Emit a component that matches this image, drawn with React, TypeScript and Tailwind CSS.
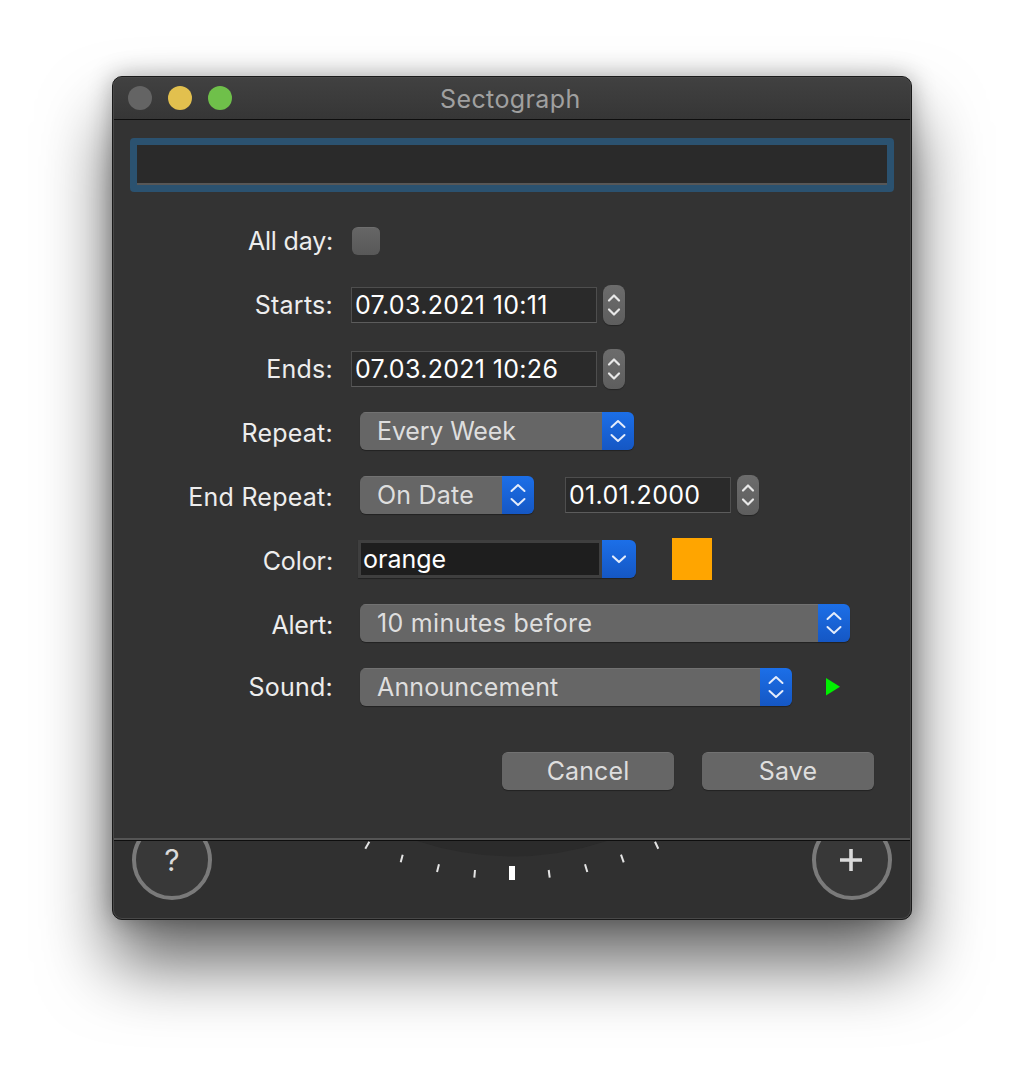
import type { ReactNode } from "react";

function Chevrons() {
  return (
    <svg width="16" height="26" viewBox="0 0 16 26" fill="none" stroke="currentColor" strokeWidth="2" strokeLinecap="round" strokeLinejoin="round">
      <path d="M1.5 9 L8 3 L14.5 9" />
      <path d="M1.5 17 L8 23 L14.5 17" />
    </svg>
  );
}

function Row({ label, h = "h-[64px]", tracking = "tracking-[0.25px]", children }: { label: string; h?: string; tracking?: string; children: ReactNode }) {
  return (
    <div className={`flex items-center ${h}`}>
      <div className={`w-[220px] shrink-0 text-right text-[25px] leading-none text-[#ededed] ${tracking}`}>{label}</div>
      {children}
    </div>
  );
}

function Stepper() {
  return (
    <div className="flex h-[40px] w-[22px] items-center justify-center rounded-[8px] bg-gradient-to-b from-[#6c6c6c] to-[#5e5e5e] text-[#e8e8e8] shadow-[0_1px_1px_rgba(0,0,0,0.3)]">
      <svg width="14" height="24" viewBox="0 0 14 24" fill="none" stroke="currentColor" strokeWidth="2.2" strokeLinecap="round" strokeLinejoin="round">
        <path d="M2 7.5 L7 2.5 L12 7.5" />
        <path d="M2 16.5 L7 21.5 L12 16.5" />
      </svg>
    </div>
  );
}

function DateField({ value, w }: { value: string; w: string }) {
  return (
    <div className={`flex h-[36px] items-center border border-[#4e4e4e] border-b-[#5c5c5c] bg-[#2a2a2a] pl-[3px] text-[25px] leading-none tracking-[0.32px] text-white ${w}`}>
      {value}
    </div>
  );
}

function Popup({ value, w, tracking = "tracking-[0.2px]" }: { value: string; w: string; tracking?: string }) {
  return (
    <div className={`flex h-[38px] overflow-hidden rounded-[6px] shadow-[0_1px_1px_rgba(0,0,0,0.35)] ${w}`}>
      <div className={`flex flex-1 items-center border-t border-[#727272] bg-[#666666] pl-[17px] text-[25px] leading-none text-[#dedede] ${tracking}`}>
        {value}
      </div>
      <div className="flex w-[32px] items-center justify-center bg-gradient-to-b from-[#1c6fe8] to-[#1557c4] text-[#e4ecfb]">
        <Chevrons />
      </div>
    </div>
  );
}

function Circle({ children }: { children: ReactNode }) {
  return (
    <div className="-mt-[21px] flex h-[80px] w-[80px] items-center justify-center rounded-full border-[4px] border-[#7a7a7a] bg-[#383838] text-[#dadada]">
      {children}
    </div>
  );
}

const ticks = [
  "M369.3 841.7 L365.3 848.7",
  "M402.7 854.7 L400.7 862.3",
  "M439 864.3 L437 872",
  "M475 870 L474.3 877.7",
  "M548.7 870 L549.7 877.7",
  "M585 864.3 L587.3 872",
  "M621 854.7 L623.7 862.3",
  "M655 841.7 L658.3 848.7",
];

export default function App() {
  return (
    <div className="h-[1068px] overflow-hidden bg-white pl-[112px] pt-[76px] font-['Inter',sans-serif]">
      <div className="relative h-[844px] w-[800px] overflow-hidden rounded-[10px] border border-[#1a1a1a] bg-[#333333] shadow-[0_44px_70px_rgba(0,0,0,0.6),0_0_24px_rgba(0,0,0,0.3)]">
        <div className="flex h-[43px] items-center border-b border-[#0e0e0e] bg-gradient-to-b from-[#414141] to-[#363636] pl-[15px]">
          <div className="flex gap-[16px]">
            <div className="h-[24px] w-[24px] rounded-full bg-[#646464]" />
            <div className="h-[24px] w-[24px] rounded-full bg-[#e2c04e]" />
            <div className="h-[24px] w-[24px] rounded-full bg-[#6fc04a]" />
          </div>
          <div className="ml-[208px] translate-y-[1px] text-[25px] leading-none tracking-[0.4px] text-[#a0a0a0]">Sectograph</div>
        </div>

        <div className="h-[720px] border-b-2 border-[#555555]">
          <div className="px-[17px] pt-[18px]">
            <div className="h-[54px] w-[764px] rounded-[4px] border-[7px] border-[#2b5270] bg-[#2a2a2a] shadow-[inset_0_-2px_0_#575757]" />
          </div>

          <div className="mt-[17px]">
            <Row label="All day:" tracking="tracking-[-0.2px]">
              <div className="ml-[19px] h-[28px] w-[28px] rounded-[6px] border-t border-[#6e6e6e] bg-gradient-to-b from-[#666666] to-[#585858]" />
            </Row>
            <Row label="Starts:">
              <div className="ml-[18px] flex items-center gap-[6px]">
                <DateField value="07.03.2021 10:11" w="w-[246px]" />
                <Stepper />
              </div>
            </Row>
            <Row label="Ends:">
              <div className="ml-[18px] flex items-center gap-[6px]">
                <DateField value="07.03.2021 10:26" w="w-[246px]" />
                <Stepper />
              </div>
            </Row>
            <Row label="Repeat:">
              <div className="mb-[4px] ml-[27px]">
                <Popup value="Every Week" w="w-[274px]" tracking="tracking-[-0.15px]" />
              </div>
            </Row>
            <Row label="End Repeat:">
              <div className="mb-[4px] ml-[27px] flex items-center">
                <Popup value="On Date" w="w-[174px]" />
                <div className="ml-[31px] mr-[6px]">
                  <DateField value="01.01.2000" w="w-[166px]" />
                </div>
                <Stepper />
              </div>
            </Row>
            <Row label="Color:" tracking="tracking-[-0.1px]">
              <div className="mb-[4px] ml-[25px] flex items-center">
                <div className="flex h-[38px] w-[278px] overflow-hidden rounded-r-[6px] shadow-[0_1px_1px_rgba(0,0,0,0.35)]">
                  <div className="flex flex-1 items-center border-[3px] border-[#3f3f3f] bg-[#1e1e1e] pl-[2px] text-[25px] leading-none text-white">
                    orange
                  </div>
                  <div className="flex w-[34px] items-center justify-center bg-gradient-to-b from-[#1c6fe8] to-[#1557c4] text-[#e4ecfb]">
                    <svg width="16" height="10" viewBox="0 0 16 10" fill="none" stroke="currentColor" strokeWidth="2.2" strokeLinecap="round" strokeLinejoin="round">
                      <path d="M2 2.5 L8 8 L14 2.5" />
                    </svg>
                  </div>
                </div>
                <div className="ml-[36px] h-[42px] w-[40px] bg-[#ffa500]" />
              </div>
            </Row>
            <Row label="Alert:" tracking="tracking-[-0.25px]">
              <div className="mb-[4px] ml-[27px]">
                <Popup value="10 minutes before" w="w-[490px]" tracking="tracking-[0.3px]" />
              </div>
            </Row>
            <Row label="Sound:" h="h-[60px]">
              <div className="ml-[27px] flex items-center">
                <Popup value="Announcement" w="w-[432px]" tracking="tracking-[0.15px]" />
                <svg className="ml-[34px]" width="14" height="18" viewBox="0 0 14 18">
                  <path d="M0 0 L14 8.7 L0 17.4 Z" fill="#00f000" />
                </svg>
              </div>
            </Row>
          </div>

          <div className="mt-[35px] flex justify-end gap-[28px] pr-[37px]">
            <button className="h-[38px] w-[172px] rounded-[6px] border-t border-[#727272] bg-[#666666] text-[25px] leading-none tracking-[0.1px] text-[#dedede] shadow-[0_1px_1px_rgba(0,0,0,0.35)]">
              Cancel
            </button>
            <button className="h-[38px] w-[172px] rounded-[6px] border-t border-[#727272] bg-[#666666] text-[25px] leading-none tracking-[0.2px] text-[#dedede] shadow-[0_1px_1px_rgba(0,0,0,0.35)]">
              Save
            </button>
          </div>
        </div>

        <div className="relative h-[79px] overflow-hidden border-t border-t-[#0e0e0e] bg-[#303030]">
          <div className="flex justify-between px-[19px]">
            <Circle>
              <span className="text-[30px] leading-none">?</span>
            </Circle>
            <Circle>
              <svg className="-translate-x-[1px]" width="24" height="24" viewBox="0 0 24 24" stroke="currentColor" strokeWidth="3.6">
                <path d="M12 1 V23 M1 12 H23" />
              </svg>
            </Circle>
          </div>
          <svg className="absolute left-0 top-0" width="798" height="78" viewBox="113 841 798 78" fill="none">
            <path d="M417 841 Q512 872 607 841 Z" fill="#2b2b2b" />
            {ticks.map((d) => (
              <path key={d} d={d} stroke="#e4e4e4" strokeWidth="2" />
            ))}
            <rect x="509" y="866" width="6" height="14" fill="#ffffff" />
          </svg>
        </div>
        <div className="pointer-events-none absolute inset-0 rounded-[9px] shadow-[inset_0_0_0_1px_#484848]" />
      </div>
    </div>
  );
}
